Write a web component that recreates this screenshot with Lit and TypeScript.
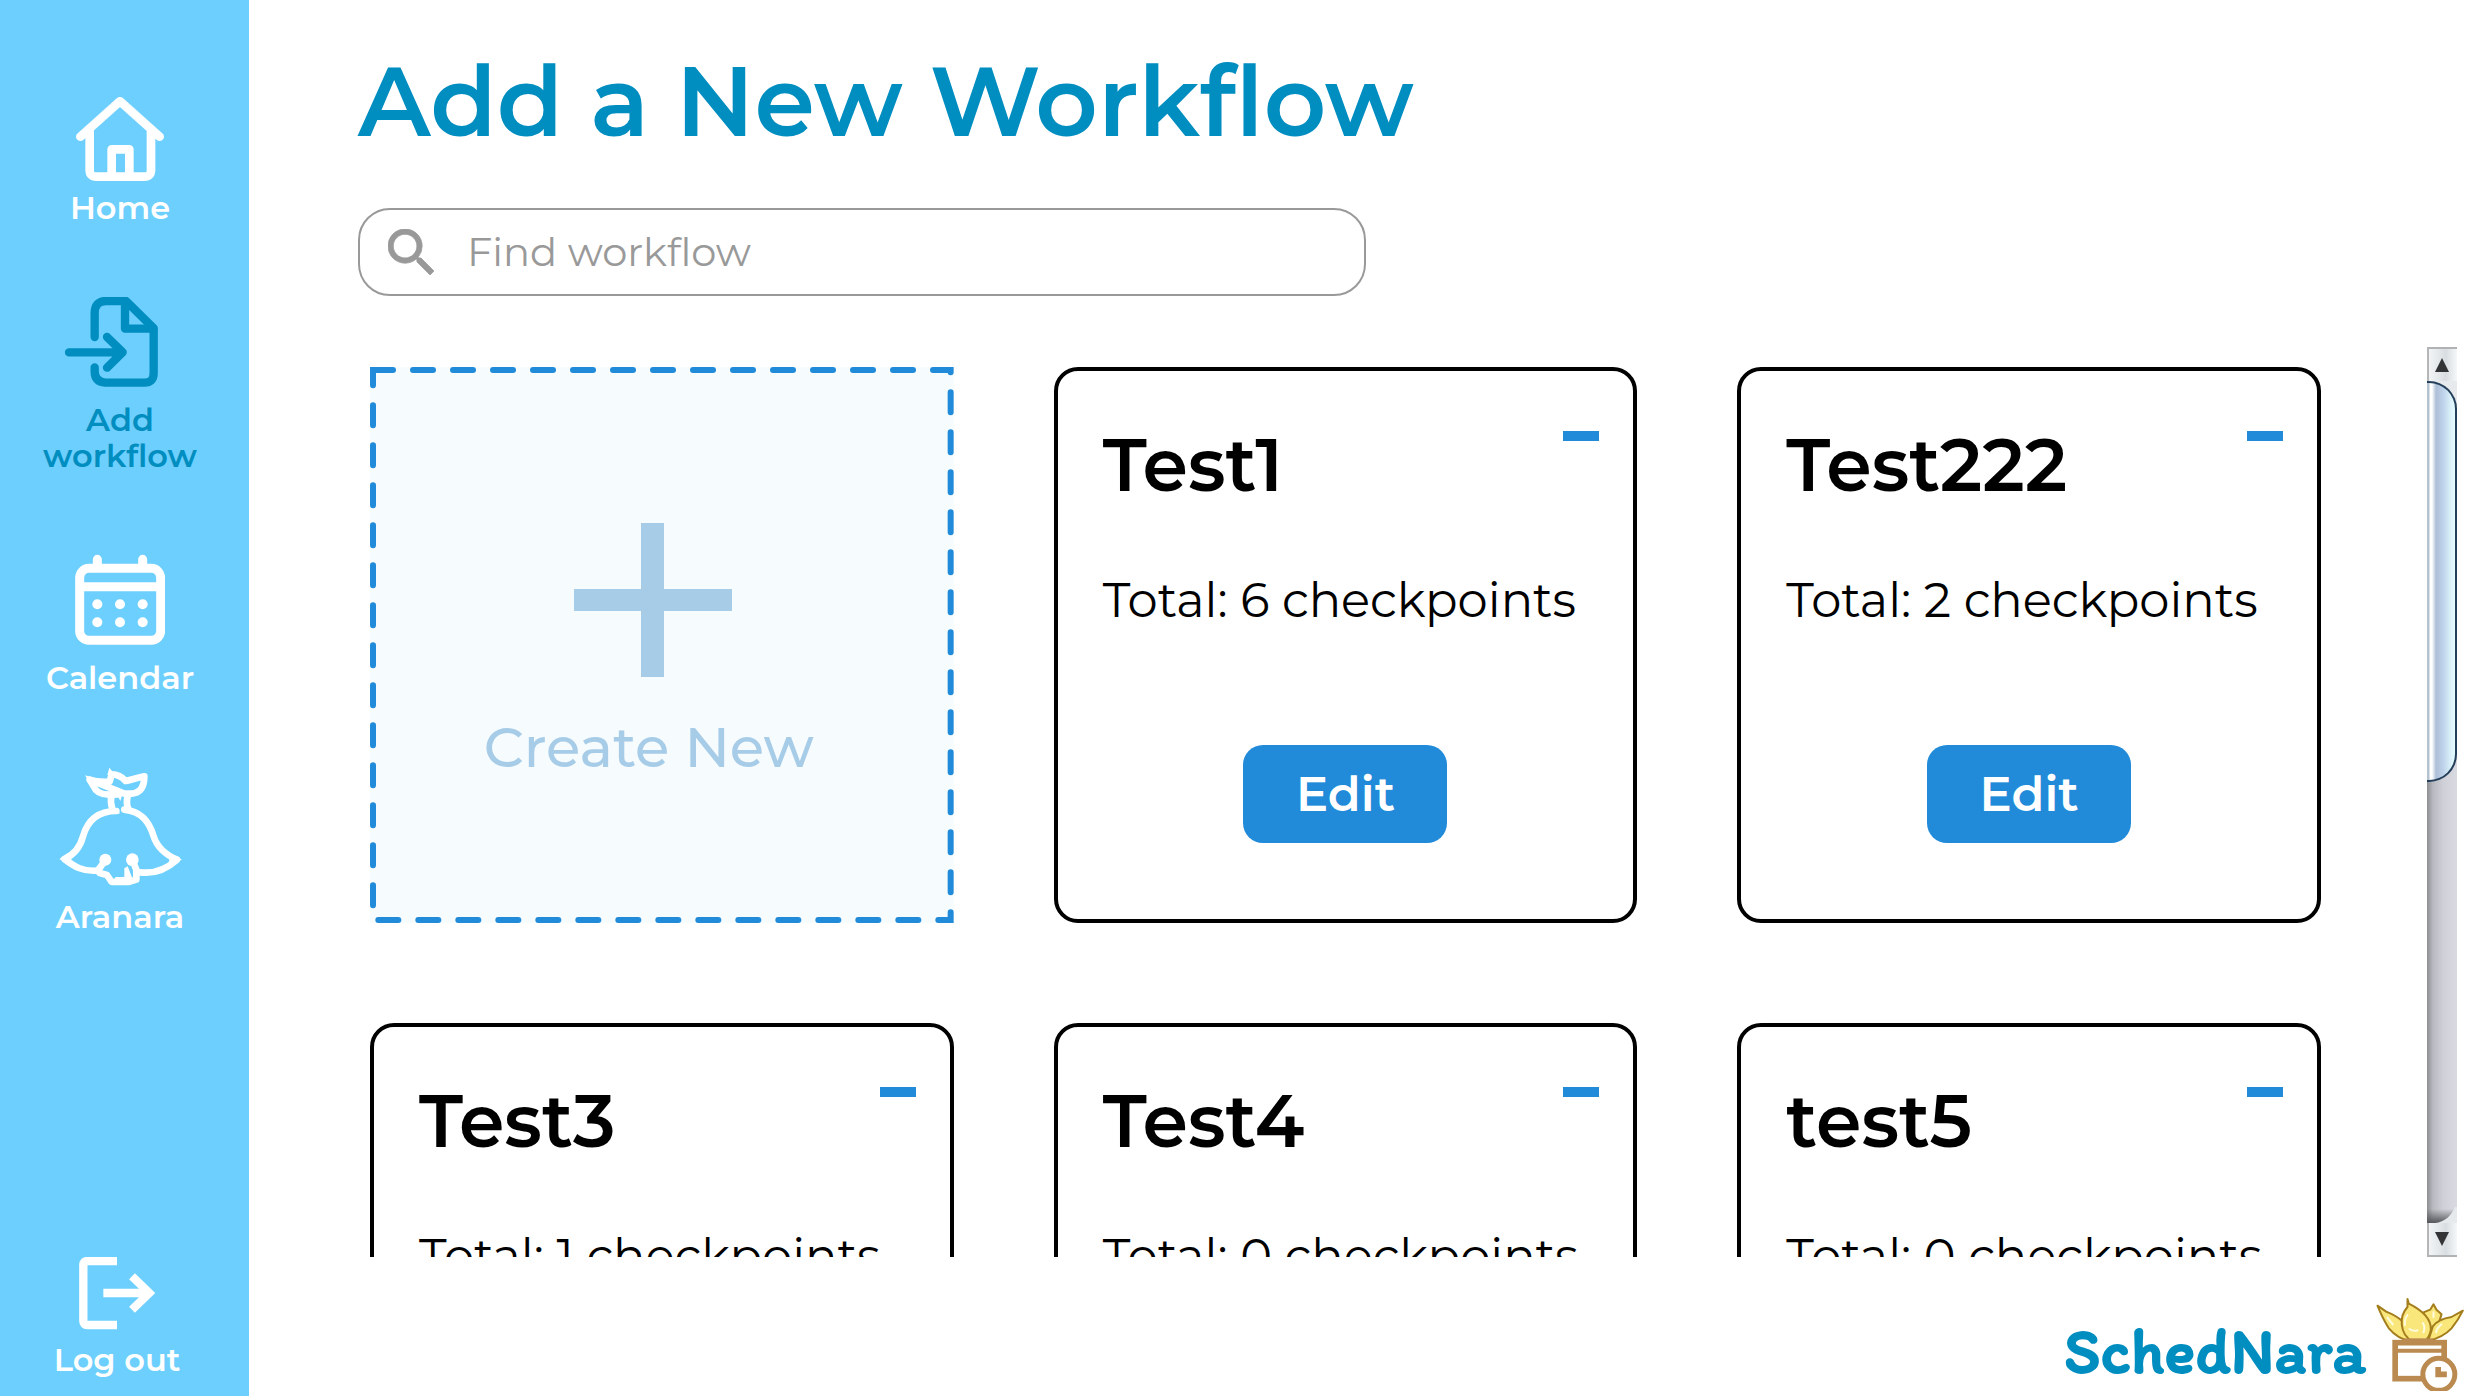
import { LitElement, html, css, svg } from "lit";
import { customElement, property, state } from "lit/decorators.js";

interface Workflow {
  name: string;
  checkpoints: number;
}

const WORKFLOWS: Workflow[] = [
  { name: "Test1", checkpoints: 6 },
  { name: "Test222", checkpoints: 2 },
  { name: "Test3", checkpoints: 1 },
  { name: "Test4", checkpoints: 0 },
  { name: "test5", checkpoints: 0 },
];

const homeIcon = html`<svg width="88" height="84" viewBox="231 111 264 252" aria-hidden="true">
  <g fill="none" stroke="currentColor" stroke-width="26" stroke-linecap="round" stroke-linejoin="round">
    <path d="M244 230L363 124L482 230" />
    <path d="M272 215V330Q272 350 292 350H436Q456 350 456 330V215" />
    <path d="M338 348V268H391V348" />
  </g>
</svg>`;

const addIcon = html`<svg width="110" height="96" viewBox="195 711 330 288" aria-hidden="true">
  <g fill="none" stroke="currentColor" stroke-width="25" stroke-linecap="round" stroke-linejoin="round">
    <path d="M284 831V760Q284 723 318 723H378L461 805V940Q461 968 433 968H316Q284 966 284 934V922" />
    <path d="M375 723V806H460" />
    <path d="M207 877H362M321 831L368 877L321 923" />
  </g>
</svg>`;

const calendarIcon = html`<svg width="90" height="106" viewBox="225 75 270 318" aria-hidden="true">
  <g fill="none" stroke="currentColor" stroke-width="27" stroke-linecap="round">
    <rect x="239" y="145" width="243" height="216" rx="28" />
    <path d="M292 118V140M428 118V140M240 200H480" />
  </g>
  <g fill="currentColor">
    <circle cx="292" cy="253" r="15" /><circle cx="360" cy="253" r="15" /><circle cx="428" cy="253" r="15" />
    <circle cx="292" cy="307" r="15" /><circle cx="360" cy="307" r="15" /><circle cx="428" cy="307" r="15" />
  </g>
</svg>`;

const aranaraIcon = html`<svg width="123" height="123" viewBox="180 742 369 369" aria-hidden="true">
  <g fill="none" stroke="currentColor" stroke-width="20" stroke-linejoin="round" stroke-linecap="round">
    <path d="M352 874C285 874 262 915 252 950C243 985 225 1005 196 1018C225 1040 250 1056 294 1053" />
    <path d="M376 870C430 875 452 910 464 950C475 985 500 1005 534 1020C505 1046 470 1064 424 1058" />
    <path d="M337 826C334 843 336 855 340 868M387 826C382 843 382 855 388 868" />
    <path d="M272 780L284 800C290 816 305 824 330 825L356 824M376 822L398 822C425 820 436 800 436 770C415 774 400 780 380 784C368 770 352 764 338 764L332 786C312 787 292 787 272 780Z" />
    <path d="M302 1060L324 1066L338 1087H388L412 1080V1050L404 1030M300 1048L314 1028" />
  </g>
  <path d="M258 767L300 780L282 806ZM331 744L347 764L325 766ZM180 1018L214 1004L220 1036ZM549 1020L514 1004L508 1036Z" fill="currentColor" />
  <path d="M354 824L374 812L364 844ZM344 862L364 882L338 876ZM338 1086L350 1072L376 1072L376 1046L386 1040L404 1086Z" fill="currentColor" />
  <circle cx="319" cy="1020" r="18" fill="currentColor" />
  <circle cx="400" cy="1020" r="19" fill="currentColor" />
</svg>`;

const logoutIcon = html`<svg width="76" height="76" viewBox="243 81 228 228" aria-hidden="true">
  <g fill="none" stroke="currentColor" stroke-width="25">
    <path d="M357 93H268Q256 93 256 105V273Q256 285 268 285H357" />
    <path d="M316 189H452M402 139L454 189L402 239" />
  </g>
</svg>`;

const searchIcon = html`<svg width="46" height="46" viewBox="3 3 17.5 17.5" aria-hidden="true">
  <path
    fill="currentColor"
    d="M15.5 14h-.79l-.28-.27A6.471 6.471 0 0 0 16 9.5 6.5 6.5 0 1 0 9.5 16c1.61 0 3.09-.59 4.23-1.57l.27.28v.79l5 4.99L20.49 19l-4.99-5zm-6 0C7.01 14 5 11.99 5 9.5S7.01 5 9.5 5 14 7.01 14 9.5 11.99 14 9.5 14z"
    stroke="currentColor"
    stroke-width="0.3"
  />
</svg>`;

const brandMark = html`<svg width="88" height="93" viewBox="1010 55 263 279" aria-hidden="true">
  <g fill="#f9e77b" stroke="#a47d1c" stroke-width="6" stroke-linejoin="round">
    <path d="M1152 98L1172 90L1182 74L1191 90L1206 104L1198 130L1170 150Z" />
    <path d="M1014 78L1040 96Q1070 108 1088 124L1112 184Q1075 178 1048 146Q1030 118 1014 78Z" />
    <path d="M1270 93L1236 112Q1196 118 1180 140L1166 184Q1212 172 1236 146Q1256 122 1270 93Z" />
    <path d="M1104 58L1108 72C1140 88 1176 112 1174 150Q1170 176 1154 184H1118C1080 164 1078 110 1104 82Z" />
  </g>
  <g fill="none" stroke="#fffbe0" stroke-width="6" stroke-linecap="round">
    <path d="M1104 106Q1094 120 1096 136M1110 148Q1122 156 1134 152M1150 130Q1158 142 1152 158" />
    <path d="M1044 114L1060 134M1206 134Q1192 144 1190 158M1182 98V112" />
  </g>
  <g fill="#fff" stroke="#ba8a50">
    <rect x="1067" y="189" width="147" height="108" stroke-width="17" />
    <path d="M1067 213H1214" stroke-width="12" />
    <path d="M1092 184H1180" stroke-width="16" />
    <circle cx="1198" cy="284" r="48" stroke-width="15" />
    <path d="M1196 262V284H1222" stroke-width="17" fill="none" />
  </g>
</svg>`;

@customElement("nav-item")
export class NavItem extends LitElement {
  @property() label = "";
  @property({ attribute: false }) icon: unknown;
  @property({ type: Boolean }) active = false;

  static styles = css`
    :host {
      display: block;
    }
    .link {
      display: flex;
      flex-direction: column;
      align-items: center;
      gap: 9px;
      color: #fff;
      text-decoration: none;
      text-align: center;
      font: 600 32px/36px Montserrat, Inter, sans-serif;
    }
    .link.active {
      color: #008dc0;
    }
    svg {
      display: block;
    }
    .label {
      max-width: 200px;
    }
  `;

  render() {
    return html`<a class="link ${this.active ? "active" : ""}" href="#" aria-current=${this.active ? "page" : "false"}>
      ${this.icon}<span class="label">${this.label}</span>
    </a>`;
  }
}

@customElement("workflow-card")
export class WorkflowCard extends LitElement {
  @property({ attribute: false }) workflow!: Workflow;

  static styles = css`
    :host {
      display: block;
    }
    .card {
      box-sizing: border-box;
      border: 4px solid #000;
      border-radius: 24px;
      padding: 50px 0 76px;
      background: #fff;
      color: #000;
      font-family: Montserrat, Inter, sans-serif;
    }
    .head {
      display: flex;
      justify-content: space-between;
      align-items: flex-start;
      padding: 0 34px 0 45px;
    }
    .title {
      margin: 0;
      font-size: 73px;
      line-height: 88px;
      font-weight: 600;
    }
    .remove {
      width: 36px;
      padding: 10px 0;
      border: 0;
      background: none;
      cursor: pointer;
    }
    .bar {
      display: block;
      height: 10px;
      background: #218bda;
    }
    .total {
      margin: 61px 0 115px;
      padding-left: 45px;
      font-size: 48px;
      line-height: 60px;
      font-weight: 400;
      white-space: nowrap;
    }
    .actions {
      display: flex;
      justify-content: center;
    }
    .edit {
      width: 204px;
      height: 98px;
      border: 0;
      border-radius: 20px;
      background: #218bda;
      color: #fff;
      font: 600 48px/60px Montserrat, Inter, sans-serif;
      cursor: pointer;
    }
  `;

  render() {
    const { name, checkpoints } = this.workflow;
    return html`<article class="card">
      <header class="head">
        <h2 class="title">${name}</h2>
        <button class="remove" aria-label="Remove ${name}"><span class="bar"></span></button>
      </header>
      <p class="total">Total: ${checkpoints} checkpoints</p>
      <div class="actions"><button class="edit">Edit</button></div>
    </article>`;
  }
}

@customElement("app-root")
export class AppRoot extends LitElement {
  @state() private query = "";

  static styles = css`
    :host {
      display: block;
      font-family: Montserrat, Inter, sans-serif;
    }
    .page {
      display: flex;
      height: 100vh;
      background: #fff;
    }
    .sidebar {
      box-sizing: border-box;
      flex: 0 0 249px;
      display: flex;
      flex-direction: column;
      gap: 71px;
      padding: 97px 9px 18px 0;
      background: #6dcffd;
    }
    .bottom {
      margin-top: auto;
      padding-right: 6px;
    }
    .main {
      flex: 1;
      min-width: 0;
      display: flex;
      flex-direction: column;
      padding: 41px 33px 0 109px;
    }
    .heading {
      margin: 0 0 47px;
      color: #008dc0;
      font-size: 97px;
      line-height: 120px;
      font-weight: 600;
      white-space: nowrap;
    }
    .search {
      box-sizing: border-box;
      display: flex;
      align-items: center;
      gap: 33px;
      width: 48%;
      height: 88px;
      padding: 0 28px;
      border: 2px solid #999;
      border-radius: 32px;
      color: #999;
      flex: none;
    }
    .field {
      flex: 1;
      min-width: 0;
      padding: 0;
      border: 0;
      outline: 0;
      background: none;
      color: #333;
      font: 400 40px/52px Montserrat, Inter, sans-serif;
    }
    .field::placeholder {
      color: #999;
      opacity: 1;
    }
    .viewport {
      display: flex;
      flex: 1;
      min-height: 0;
      margin-top: 51px;
    }
    .scroller {
      flex: 1;
      min-width: 0;
      overflow-y: auto;
      scrollbar-width: none;
      padding: 20px 106px 20px 12px;
    }
    .grid {
      display: grid;
      grid-template-columns: repeat(3, minmax(0, 1fr));
      gap: 100px;
    }
    .create {
      position: relative;
      display: flex;
      flex-direction: column;
      align-items: center;
      gap: 36px;
      padding: 156px 18px 0 0;
      border: 0;
      background: #f6fbfe;
      color: #a7cce8;
      font: 500 56px/68px Montserrat, Inter, sans-serif;
      cursor: pointer;
    }
    .caption {
      padding-right: 8px;
    }
    .dashes {
      position: absolute;
      inset: 0;
      width: 100%;
      height: 100%;
    }
    .dashes rect {
      width: calc(100% - 6px);
      height: calc(100% - 6px);
      fill: none;
      stroke: #218bda;
      stroke-width: 6;
      stroke-linecap: round;
      stroke-dasharray: 20 20;
    }
    .rail {
      flex: 0 0 30px;
      display: flex;
      flex-direction: column;
      background: linear-gradient(90deg, #8d8e92, #b9bac0 20%, #d0d1d8 55%, #d8dae2);
    }
    .step {
      flex: none;
      height: 34px;
      padding: 0 2px 0 0;
      border: 0;
      border-left: 2px solid #b4b6b8;
      background: linear-gradient(90deg, #f2f4f5, #e2e6e9 40%, #d8dde1 60%, #f4f8fa);
    }
    .step svg {
      display: block;
      margin: 0 auto;
    }
    .up {
      border-top: 2px solid #b0b2b4;
    }
    .down {
      border-bottom: 2px solid #b0b2b4;
    }
    .track {
      flex: 1;
      min-height: 0;
      display: flex;
      flex-direction: column;
      background: linear-gradient(#e6eaed 0 28px, #e6eaed00 28px);
    }
    .thumb {
      box-sizing: border-box;
      flex: 9;
      border: 2px solid #243f5a;
      border-left: 0;
      border-radius: 0 28px 28px 0;
      background: linear-gradient(90deg, #b4c2d0 0 2px, #fff 3px 5px, #aebfd6 9px, #bdd2ea 16px, #dcf2fa 24px, #e4fbff);
    }
    .rest {
      flex: 10;
      display: flex;
      align-items: flex-end;
      background: linear-gradient(0deg, #55565a, #55565a00 14px);
    }
    .footer {
      display: flex;
      flex: none;
      justify-content: flex-end;
      align-items: center;
      gap: 10px;
      height: 98px;
      padding-top: 41px;
      margin-right: -7px;
    }
    .brand {
      padding-top: 6px;
      color: #008dc0;
      font: 700 65px/72px Itim, Lato, sans-serif;
    }
    .footer svg {
      margin-bottom: 5px;
    }
  `;

  private get visible() {
    const needle = this.query.trim().toLowerCase();
    return WORKFLOWS.filter((w) => w.name.toLowerCase().includes(needle));
  }

  private scrollList(amount: number) {
    this.renderRoot.querySelector(".scroller")?.scrollBy({ top: amount });
  }

  private arrow(points: string) {
    return html`<svg width="14" height="14" viewBox="0 0 14 14" aria-hidden="true">
      ${svg`<polygon points=${points} fill="#333435" />`}
    </svg>`;
  }

  render() {
    return html`<div class="page">
      <nav class="sidebar" aria-label="Main">
        <nav-item label="Home" .icon=${homeIcon}></nav-item>
        <nav-item label="Add workflow" active .icon=${addIcon}></nav-item>
        <nav-item label="Calendar" .icon=${calendarIcon}></nav-item>
        <nav-item label="Aranara" .icon=${aranaraIcon}></nav-item>
        <nav-item class="bottom" label="Log out" .icon=${logoutIcon}></nav-item>
      </nav>
      <main class="main">
        <h1 class="heading">Add a New Workflow</h1>
        <label class="search">
          ${searchIcon}
          <input
            class="field"
            type="text"
            aria-label="Find workflow"
            placeholder="Find workflow"
            .value=${this.query}
            @input=${(e: Event) => (this.query = (e.target as HTMLInputElement).value)}
          />
        </label>
        <div class="viewport">
          <div class="scroller">
            <div class="grid">
              <button class="create">
                <svg class="dashes" aria-hidden="true"><rect x="3" y="3" /></svg>
                <svg width="158" height="154" viewBox="0 0 158 154" aria-hidden="true">
                  <path d="M67 0h23v66h68v22H90v66H67V88H0V66h67z" fill="currentColor" />
                </svg>
                <span class="caption">Create New</span>
              </button>
              ${this.visible.map((w) => html`<workflow-card .workflow=${w}></workflow-card>`)}
            </div>
          </div>
          <div class="rail">
            <button class="step up" aria-label="Scroll up" @click=${() => this.scrollList(-160)}>
              ${this.arrow("7,0 14,14 0,14")}
            </button>
            <div class="track">
              <div class="thumb"></div>
              <div class="rest">
                <svg width="30" height="16" viewBox="0 0 30 16" aria-hidden="true">
                  <path d="M8 16C18 15 24 9 28 0H30V16Z" fill="#e6eaed" />
                </svg>
              </div>
            </div>
            <button class="step down" aria-label="Scroll down" @click=${() => this.scrollList(160)}>
              ${this.arrow("0,0 14,0 7,14")}
            </button>
          </div>
        </div>
        <footer class="footer"><span class="brand">SchedNara</span>${brandMark}</footer>
      </main>
    </div>`;
  }
}
